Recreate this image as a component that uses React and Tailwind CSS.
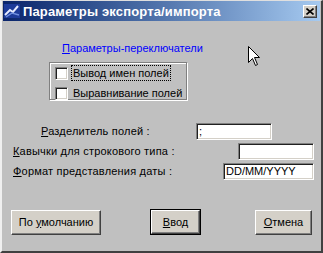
import React from "react"

const sunken =
  "bg-white border-t border-l border-[#808080] border-b border-r border-b-white border-r-white shadow-[inset_1px_1px_0_#202020,inset_-1px_-1px_0_#d4d0c8]"

const raised =
  "bg-[#d4d0c8] border-t border-l border-white border-b border-r border-b-[#404040] border-r-[#404040] shadow-[inset_-1px_-1px_0_#808080]"

function Checkbox({ label, focused }) {
  return (
    <div className="flex items-center h-[20px]">
      <div className={`w-[13px] h-[13px] ${sunken}`} />
      <span
        className={`ml-[4px] px-[1px] leading-[14px] ${
          focused ? "outline outline-1 outline-dotted outline-black" : ""
        }`}
      >
        {label}
      </span>
    </div>
  )
}

function Field({ label, u, labelMl, inputW, inputMr, value }) {
  return (
    <div className="flex items-center h-[20px]">
      <span className="tracking-[0.2px]" style={{ marginLeft: labelMl }}>
        <span className="underline">{u}</span>
        {label}
      </span>
      <div
        className={`ml-auto h-[17px] flex items-center pl-[2px] text-black ${sunken}`}
        style={{ width: inputW, marginRight: inputMr }}
      >
        {value}
      </div>
    </div>
  )
}

export default function App() {
  return (
    <div
      className="relative w-[323px] h-[253px] bg-[#c0c0c0] border-l-2 border-t border-l-[#f0f0f0] border-t-[#dfdfdf] border-r-2 border-b-2 border-r-[#404040] border-b-[#404040] text-[11px] text-black overflow-hidden"
      style={{ fontFamily: '"Liberation Sans", Arial, sans-serif' }}
    >
      {/* Title bar */}
      <div className="h-[20px] mx-[1px] flex items-center bg-gradient-to-r from-[#0a246a] to-[#a6caf0]">
        <svg width="16" height="16" viewBox="0 0 16 16" className="ml-[1px]">
          <rect x="0" y="1" width="16" height="14" fill="#1d3b9a" />
          <path d="M1 12 L6 7 L9 9 L14 3" stroke="#e6ecff" strokeWidth="2" fill="none" />
          <path d="M2 14 L8 10 L15 12" stroke="#6f8fe0" strokeWidth="1.5" fill="none" />
        </svg>
        <span className="ml-[3px] text-white font-bold text-[13px] tracking-[0.15px] leading-none">
          Параметры экспорта/импорта
        </span>
        <div className={`ml-auto mr-[3px] w-[14px] h-[13px] flex items-center justify-center ${raised}`}>
          <svg width="8" height="7" viewBox="0 0 8 7">
            <path d="M0.5 0.5 L7.5 6.5 M7.5 0.5 L0.5 6.5" stroke="#000" strokeWidth="1.6" />
          </svg>
        </div>
      </div>

      {/* Options */}
      <div className="mt-[21px] ml-[60px] text-[#0000ff] leading-[12px]">
        <span className="underline">П</span>араметры-переключатели
      </div>
      <div className="mt-[8px] ml-[47px] w-[138px] h-[38px] border border-[#808080] shadow-[1px_1px_0_#fff,inset_1px_1px_0_#fff] pl-[5px]">
        <Checkbox label="Вывод имен полей" focused />
        <Checkbox label="Выравнивание полей" />
      </div>

      {/* Fields */}
      <div className="mt-[21px] flex flex-col">
        <Field u="Р" label="азделитель полей :" labelMl={39} inputW={76} inputMr={49} value=";" />
        <Field u="К" label="авычки для строкового типа :" labelMl={11} inputW={76} inputMr={7} />
        <Field u="Ф" label="ормат представления даты :" labelMl={11} inputW={91} inputMr={7} value="DD/MM/YYYY" />
      </div>

      {/* Buttons */}
      <div className="mt-[28px] flex items-center">
        <button className={`ml-[9px] w-[90px] h-[25px] ${raised}`}>
          По <span className="underline">у</span>молчанию
        </button>
        <div className="ml-[49px] border border-black">
          <button className={`w-[49px] h-[24px] ${raised}`}>
            <span className="underline">В</span>вод
          </button>
        </div>
        <button className={`ml-[54px] w-[57px] h-[25px] ${raised}`}>
          <span className="underline">О</span>тмена
        </button>
      </div>

      {/* Mouse cursor */}
      <svg
        className="absolute left-[246px] top-[45px]"
        width="13"
        height="21"
        viewBox="0 0 13 21"
      >
        <path
          d="M0.5 0.5 L0.5 16.5 L4.5 12.5 L7.5 19.5 L9.5 18.5 L6.5 11.5 L11.5 11.5 Z"
          fill="#fff"
          stroke="#000"
          strokeWidth="1"
        />
      </svg>
    </div>
  )
}
